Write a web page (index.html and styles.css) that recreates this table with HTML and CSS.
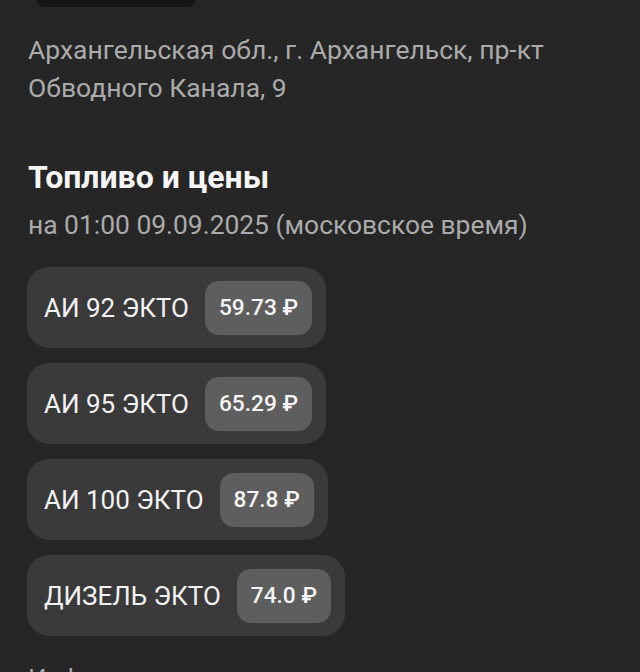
FILE: index.html
```html
<!DOCTYPE html>
<html lang="ru">
<head>
<meta charset="utf-8">
<link rel="stylesheet" href="styles.css">
</head>
<body>
<div class="page">
  <div class="top-pill"></div>
  <p class="address">Архангельская обл., г. Архангельск, пр-кт Обводного Канала, 9</p>
  <h2 class="title">Топливо и цены</h2>
  <p class="subtitle">на 01:00 09.09.2025 (московское время)</p>
  <div class="fuels">
    <div class="fuel"><span class="fuel-name">АИ 92 ЭКТО</span><span class="price">59.73 ₽</span></div>
    <div class="fuel"><span class="fuel-name">АИ 95 ЭКТО</span><span class="price">65.29 ₽</span></div>
    <div class="fuel"><span class="fuel-name">АИ 100 ЭКТО</span><span class="price">87.8 ₽</span></div>
    <div class="fuel"><span class="fuel-name">ДИЗЕЛЬ ЭКТО</span><span class="price">74.0 ₽</span></div>
  </div>
  <p class="more">Информация</p>
</div>
</body>
</html>
```
FILE: styles.css
```css
html, body {
  margin: 0;
  padding: 0;
  background: #262626;
  height: 100%;
  overflow: hidden;
}
.page {
  font-family: Roboto, "Noto Sans", sans-serif;
  padding: 0 28px;
  color: #f2f2f2;
}
.top-pill {
  width: 158px;
  height: 7px;
  margin-left: 9px;
  background: #141414;
  border-radius: 0 0 24px 24px;
}
.address {
  margin: 24px 0 0;
  font-size: 26.5px;
  line-height: 38px;
  color: #ababab;
  max-width: 560px;
}
.title {
  margin: 51px 0 0;
  font-size: 32px;
  line-height: 38px;
  font-weight: 700;
  color: #f5f5f5;
}
.subtitle {
  margin: 11px 0 0;
  font-size: 26.4px;
  line-height: 36px;
  color: #ababab;
}
.fuels {
  margin-top: 24px;
  margin-left: -1px;
  display: flex;
  flex-direction: column;
  align-items: flex-start;
  gap: 15px;
}
.fuel {
  display: flex;
  align-items: center;
  gap: 16px;
  height: 81px;
  box-sizing: border-box;
  padding: 0 14px 0 17px;
  background: #3a3a3a;
  border-radius: 22px;
}
.fuel-name {
  font-size: 26px;
  color: #f2f2f2;
}
.price {
  display: flex;
  align-items: center;
  height: 54px;
  padding: 0 14px;
  background: #5e5e5e;
  border-radius: 14px;
  font-size: 22.7px;
  font-weight: 500;
  color: #f5f5f5;
}
.more {
  margin: 25px 0 0;
  font-size: 26px;
  line-height: 36px;
  color: #ababab;
}
```
